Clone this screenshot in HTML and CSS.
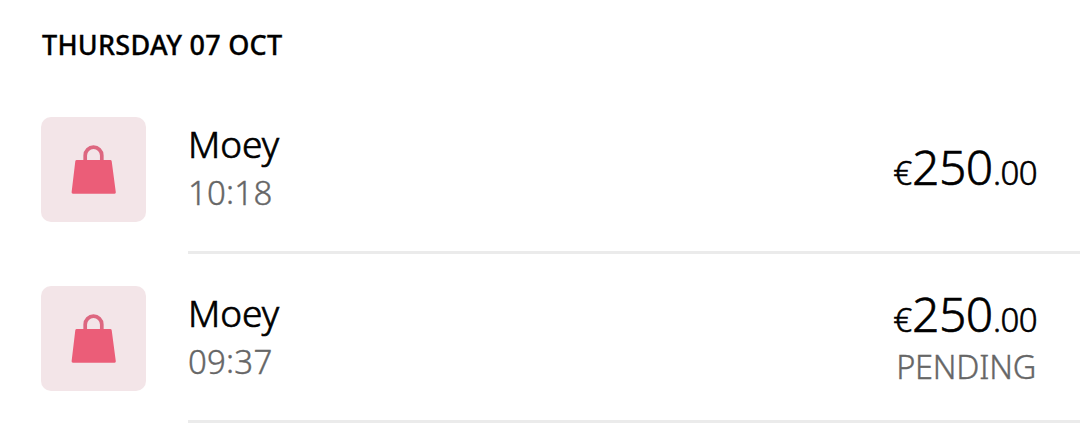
FILE: index.html
```html
<!DOCTYPE html>
<html lang="en">
<head>
<meta charset="utf-8">
<title>Transactions</title>
<link rel="stylesheet" href="styles.css">
</head>
<body>
<main class="list">
  <h1 class="date">THURSDAY 07 OCT</h1>
  <article class="row">
    <div class="tile"><svg class="bag" viewBox="0 0 46 50"><path class="handle" d="M14.200 16V10.500a8.300 8.300 0 0 1 16.600 0V16"/><path class="sack" d="M5.700 15H39.300Q40.500 15 40.700 16.200L44.800 47.300Q45 48.700 43.600 48.700H2Q.5 48.700 .6 47.300L4.300 16.200Q4.500 15 5.700 15Z"/></svg></div>
    <div class="body">
      <div class="info"><div class="name">Moey</div><div class="time">10<span class="colon">:</span>18</div></div>
      <div class="money"><div class="amount"><span class="small euro">€</span><span class="big">250</span><span class="small">.00</span></div></div>
    </div>
  </article>
  <article class="row">
    <div class="tile"><svg class="bag" viewBox="0 0 46 50"><path class="handle" d="M14.200 16V10.500a8.300 8.300 0 0 1 16.600 0V16"/><path class="sack" d="M5.700 15H39.300Q40.500 15 40.700 16.200L44.800 47.300Q45 48.700 43.600 48.700H2Q.5 48.700 .6 47.300L4.300 16.200Q4.500 15 5.700 15Z"/></svg></div>
    <div class="body">
      <div class="info"><div class="name">Moey</div><div class="time">09<span class="colon">:</span>37</div></div>
      <div class="money"><div class="amount"><span class="small euro">€</span><span class="big">250</span><span class="small">.00</span></div><div class="status">PENDING</div></div>
    </div>
  </article>
</main>
</body>
</html>
```
FILE: styles.css
```css
* { box-sizing: border-box; }
body { margin: 0; background: #fff; color: #000; font-family: "Noto Sans", sans-serif; overflow: hidden; }
.date { margin: 0; height: 85px; padding: 28px 0 0 42px; font-size: 27px; line-height: 34px; font-weight: 500; letter-spacing: .25px; white-space: nowrap; -webkit-text-stroke: .3px; }
.row { display: flex; height: 169px; padding-left: 41px; align-items: center; }
.tile { display: flex; width: 105px; height: 105px; margin-right: 42px; border-radius: 10px; background: #f3e5e8; align-items: center; justify-content: center; }
.bag { width: 46px; height: 50px; }
.handle { fill: none; stroke: #dd6780; stroke-width: 3.700; }
.sack { fill: #eb5d78; }
.body { display: flex; flex: 1; height: 169px; padding-right: 43px; border-bottom: 3px solid #ebebeb; justify-content: space-between; align-items: center; }
.name { font-size: 37px; line-height: 48px; font-weight: 300; -webkit-text-stroke: .7px; }
.time { padding-top: 1px; margin-bottom: -1px; font-size: 33px; line-height: 48px; font-weight: 300; letter-spacing: .2px; color: #666; -webkit-text-stroke: .4px; }
.colon { display: inline-block; line-height: 1; transform: translateY(-1px); }
.money { text-align: right; }
.amount { padding-top: 4px; font-size: 48px; line-height: 58px; font-weight: 300; white-space: nowrap; -webkit-text-stroke: .6px; }
.big { margin-right: .5px; letter-spacing: -.6px; }
.small { font-size: 33px; letter-spacing: -.6px; }
.euro { letter-spacing: 0; }
.status { margin: -2px 0 6px; padding-right: 1px; font-size: 32.500px; line-height: 40px; font-weight: 300; letter-spacing: -.2px; color: #666; -webkit-text-stroke: .4px; }
```
